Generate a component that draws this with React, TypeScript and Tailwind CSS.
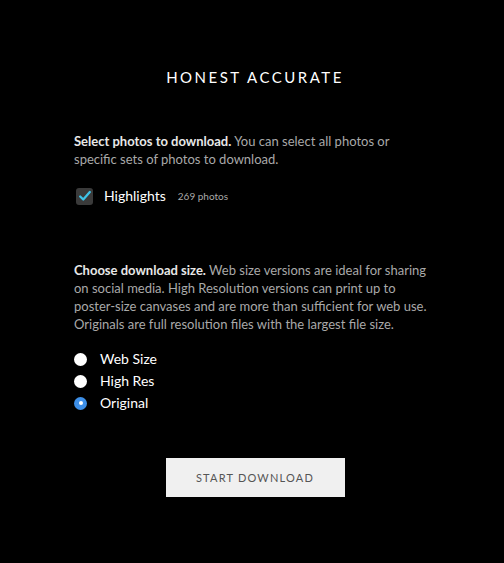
import React from 'react';

const options = [
  { label: 'Web Size', checked: false },
  { label: 'High Res', checked: false },
  { label: 'Original', checked: true },
];

export default function App() {
  return (
    <div className="min-h-[563px] w-full bg-black font-['Lato','Open_Sans',sans-serif] text-[13px] leading-[18px]">
      <div className="ml-[74px] w-[362px] pt-[68px]">
        <h1 className="text-center text-[15px] leading-[18px] font-normal tracking-[2.5px] text-white">
          HONEST ACCURATE
        </h1>

        {/* photos section */}
        <p className="mt-[46px] w-[356px] text-[#a9a9a9]">
          <span className="font-bold text-[#e8e8e8]">Select photos to download.</span> You can
          select all photos or specific sets of photos to download.
        </p>
        <label className="mt-[19px] ml-[2px] flex items-center">
          <span className="flex h-[17px] w-[17px] items-center justify-center rounded-[3px] bg-[#3a3a3a]">
            <svg viewBox="0 0 16 16" className="h-[14px] w-[14px]">
              <path d="M2.5 8.5 L6 12 L13.5 3.5" fill="none" stroke="#3ec3e8" strokeWidth="2.6" strokeLinecap="round" strokeLinejoin="round" />
            </svg>
          </span>
          <span className="ml-[11px] text-[14px] text-white">Highlights</span>
          <span className="ml-[12px] text-[10px] text-[#a9a9a9]">269 photos</span>
        </label>

        {/* size section */}
        <p className="mt-[56px] w-[362px] text-[#a9a9a9]">
          <span className="font-bold text-[#e8e8e8]">Choose download size.</span> Web size
          versions are ideal for sharing on social media. High Resolution versions can print up to
          poster-size canvases and are more than sufficient for web use. Originals are full
          resolution files with the largest file size.
        </p>
        <div className="mt-[17px] flex flex-col gap-[4px]">
          {options.map((o) => (
            <label key={o.label} className="flex h-[18px] items-center">
              {o.checked ? (
                <span className="flex h-[13px] w-[13px] items-center justify-center rounded-full bg-[#3d8fe8]">
                  <span className="h-[4px] w-[4px] rounded-full bg-white" />
                </span>
              ) : (
                <span className="h-[13px] w-[13px] rounded-full bg-white" />
              )}
              <span className="ml-[13px] text-[14px] text-white">{o.label}</span>
            </label>
          ))}
        </div>

        <div className="mt-[46px] flex justify-center">
          <button className="h-[39px] w-[179px] bg-[#f0f0f0] text-[11px] tracking-[1.2px] text-[#555]">
            START DOWNLOAD
          </button>
        </div>
      </div>
    </div>
  );
}
